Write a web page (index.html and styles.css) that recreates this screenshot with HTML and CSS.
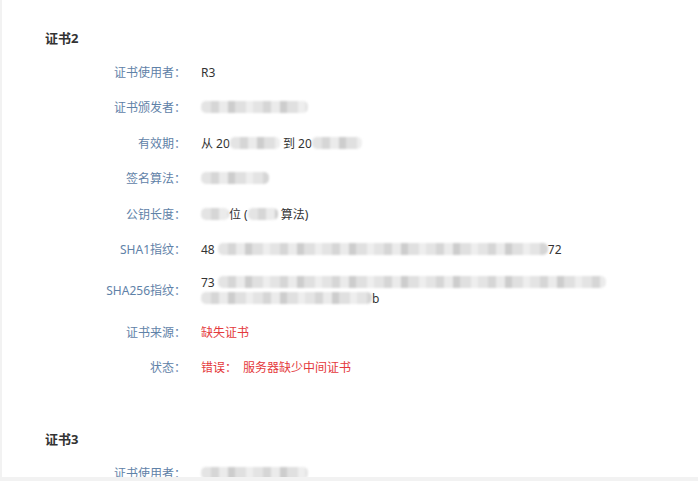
FILE: index.html
```html
<!DOCTYPE html>
<html lang="zh-CN">
<head>
<meta charset="utf-8">
<title>证书</title>
<link rel="stylesheet" href="styles.css">
</head>
<body>
<div class="card">
  <section class="cert">
    <h3 class="cert-title">证书2</h3>
    <div class="rows">
      <div class="row"><div class="label">证书使用者：</div><div class="value">R3</div></div>
      <div class="row"><div class="label">证书颁发者：</div><div class="value"><span class="mask m-issuer"></span></div></div>
      <div class="row"><div class="label">有效期：</div><div class="value">从 20<span class="mask m-date1"></span> 到 20<span class="mask m-date2"></span></div></div>
      <div class="row"><div class="label">签名算法：</div><div class="value"><span class="mask m-alg"></span></div></div>
      <div class="row"><div class="label">公钥长度：</div><div class="value"><span class="mask m-len"></span>位 (<span class="mask m-key"></span> 算法)</div></div>
      <div class="row"><div class="label">SHA1指纹：</div><div class="value">48 <span class="mask m-sha1"></span>72</div></div>
      <div class="row row-multi"><div class="label">SHA256指纹：</div><div class="value multi"><span class="line">73 <span class="mask m-sha256a"></span></span><span class="line"><span class="mask m-sha256b"></span>b</span></div></div>
      <div class="row"><div class="label">证书来源：</div><div class="value error">缺失证书</div></div>
      <div class="row"><div class="label">状态：</div><div class="value error">错误：<span class="sep"></span>服务器缺少中间证书</div></div>
    </div>
  </section>
  <section class="cert">
    <h3 class="cert-title">证书3</h3>
    <div class="rows">
      <div class="row"><div class="label">证书使用者：</div><div class="value"><span class="mask m-issuer"></span></div></div>
    </div>
  </section>
</div>
</body>
</html>
```

FILE: styles.css
```css
html, body {
  margin: 0;
  padding: 0;
}
body {
  background: #f2f2f2;
  font-family: "Noto Sans", "Noto Sans CJK SC", sans-serif;
  font-size: 12px;
  color: #333;
}
.card {
  background: #fff;
  margin-left: 2px;
  height: 477px;
  overflow: hidden;
  padding: 28px 0 0 43px;
  box-sizing: border-box;
}
.cert {
  margin-bottom: 51px;
}
.cert-title {
  margin: 0;
  font-size: 13px;
  line-height: 20px;
  font-weight: bold;
  color: #333;
}
.rows {
  display: flex;
  flex-direction: column;
  gap: 15.4px;
  margin-top: 15px;
}
.row {
  display: flex;
  align-items: center;
  line-height: 20px;
}
.label {
  width: 141px;
  text-align: right;
  color: #5f82a8;
  flex: none;
}
.value {
  margin-left: 15px;
  color: #333;
  white-space: nowrap;
}
.value.multi {
  display: flex;
  flex-direction: column;
  line-height: 16px;
}
.error {
  color: #e4393c;
}
.sep {
  display: inline-block;
  width: 6px;
}
.mask {
  display: inline-block;
  height: 12px;
  vertical-align: -1px;
  border-radius: 5px;
  filter: blur(1.1px);
  background:
    repeating-linear-gradient(90deg,
      #e4e4e4 0 10px, #d6d6d6 10px 18px, #ebebeb 18px 27px,
      #cdcdcd 27px 34px, #e0e0e0 34px 45px, #eeeeee 45px 52px);
}
.m-issuer { width: 107px; }
.m-date1 { width: 50px; }
.m-date2 { width: 50px; }
.m-alg { width: 68px; }
.m-len { width: 28px; }
.m-key { width: 30px; }
.m-sha1 { width: 330px; }
.m-sha256a { width: 388px; }
.m-sha256b { width: 171px; }
```
